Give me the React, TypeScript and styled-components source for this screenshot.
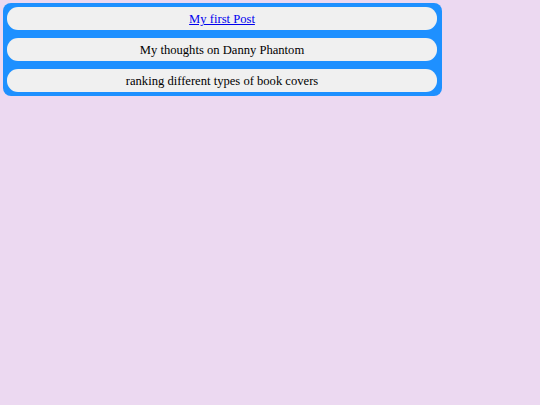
import styled, { createGlobalStyle } from "styled-components";

const GlobalStyle = createGlobalStyle`
  html, body {
    margin: 0;
    background: #ecd9f1;
  }
  body {
    padding: 3px;
    font-family: "Liberation Serif", "Times New Roman", serif;
    font-size: 12.6px;
  }
`;

const PostList = styled.nav`
  width: 439px;
  box-sizing: border-box;
  display: flex;
  flex-direction: column;
  gap: 8px;
  padding: 4px 5px 4px 4px;
  background: #1e90ff;
  border-radius: 8px;
`;

const PostItem = styled.div`
  height: 23px;
  box-sizing: border-box;
  padding-top: 2px;
  display: flex;
  align-items: center;
  justify-content: center;
  background: #f0f0f0;
  border-radius: 11px;
  color: #000;
`;

const PostLink = styled.a`
  color: #0000ee;
  text-decoration: underline;
`;

const posts = [
  { title: "My first Post", link: true },
  { title: "My thoughts on Danny Phantom", link: false },
  { title: "ranking different types of book covers", link: false },
];

const App = () => {
  return (
    <>
      <GlobalStyle />
      <PostList>
        {posts.map((post) => (
          <PostItem key={post.title}>
            {post.link ? <PostLink href="#">{post.title}</PostLink> : post.title}
          </PostItem>
        ))}
      </PostList>
    </>
  );
};

export default App;
